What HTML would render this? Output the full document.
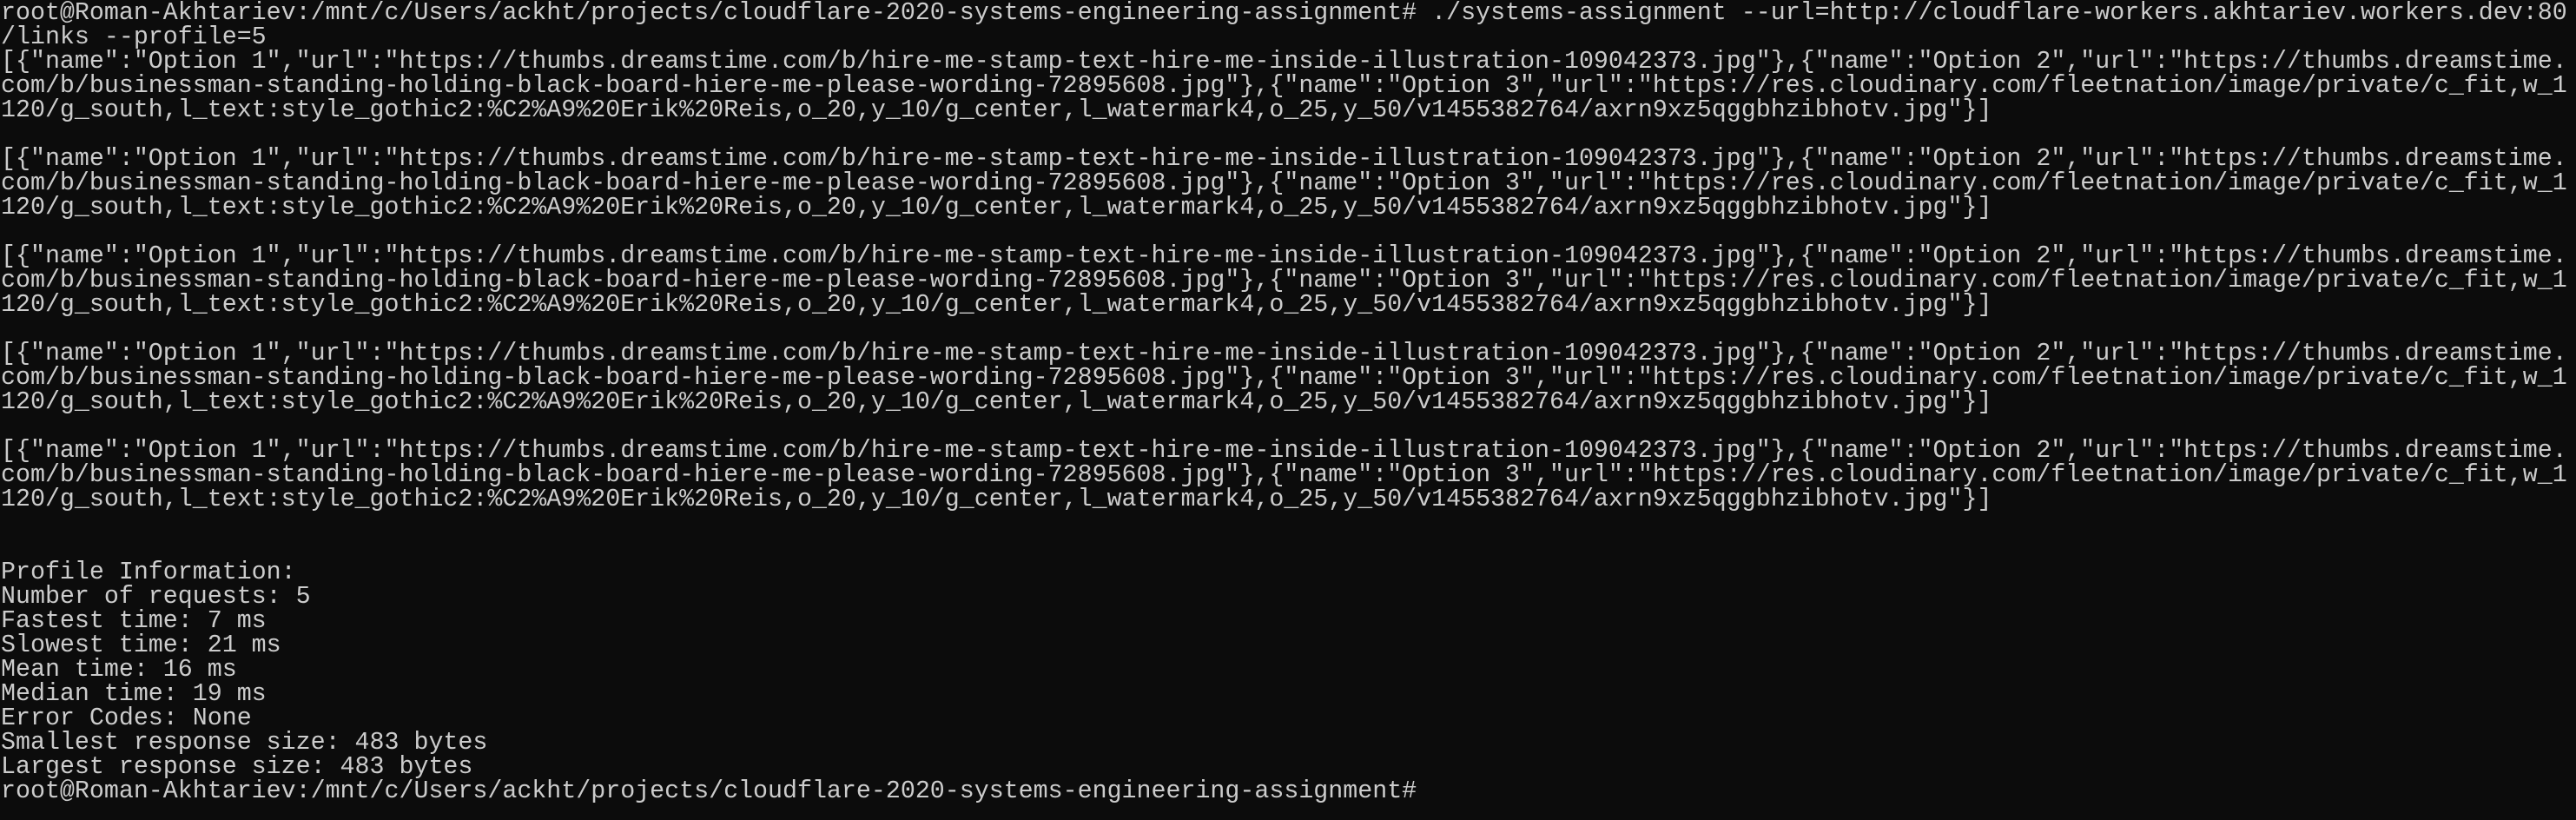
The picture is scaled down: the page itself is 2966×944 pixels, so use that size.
<!DOCTYPE html>
<html><head><meta charset="utf-8"><style>
html,body{margin:0;padding:0;background:#0c0c0c;width:2966px;height:944px;overflow:hidden}
pre{margin:0;padding:1px 0 0 1px;font-family:"Liberation Mono",monospace;font-size:28.3px;line-height:28px;color:#cccccc;white-space:pre;letter-spacing:0}
</style></head><body><pre>root@Roman-Akhtariev:/mnt/c/Users/ackht/projects/cloudflare-2020-systems-engineering-assignment# ./systems-assignment --url=http://cloudflare-workers.akhtariev.workers.dev:80
/links --profile=5
[{"name":"Option 1","url":"https://thumbs.dreamstime.com/b/hire-me-stamp-text-hire-me-inside-illustration-109042373.jpg"},{"name":"Option 2","url":"https://thumbs.dreamstime.
com/b/businessman-standing-holding-black-board-hiere-me-please-wording-72895608.jpg"},{"name":"Option 3","url":"https://res.cloudinary.com/fleetnation/image/private/c_fit,w_1
120/g_south,l_text:style_gothic2:%C2%A9%20Erik%20Reis,o_20,y_10/g_center,l_watermark4,o_25,y_50/v1455382764/axrn9xz5qggbhzibhotv.jpg"}]

[{"name":"Option 1","url":"https://thumbs.dreamstime.com/b/hire-me-stamp-text-hire-me-inside-illustration-109042373.jpg"},{"name":"Option 2","url":"https://thumbs.dreamstime.
com/b/businessman-standing-holding-black-board-hiere-me-please-wording-72895608.jpg"},{"name":"Option 3","url":"https://res.cloudinary.com/fleetnation/image/private/c_fit,w_1
120/g_south,l_text:style_gothic2:%C2%A9%20Erik%20Reis,o_20,y_10/g_center,l_watermark4,o_25,y_50/v1455382764/axrn9xz5qggbhzibhotv.jpg"}]

[{"name":"Option 1","url":"https://thumbs.dreamstime.com/b/hire-me-stamp-text-hire-me-inside-illustration-109042373.jpg"},{"name":"Option 2","url":"https://thumbs.dreamstime.
com/b/businessman-standing-holding-black-board-hiere-me-please-wording-72895608.jpg"},{"name":"Option 3","url":"https://res.cloudinary.com/fleetnation/image/private/c_fit,w_1
120/g_south,l_text:style_gothic2:%C2%A9%20Erik%20Reis,o_20,y_10/g_center,l_watermark4,o_25,y_50/v1455382764/axrn9xz5qggbhzibhotv.jpg"}]

[{"name":"Option 1","url":"https://thumbs.dreamstime.com/b/hire-me-stamp-text-hire-me-inside-illustration-109042373.jpg"},{"name":"Option 2","url":"https://thumbs.dreamstime.
com/b/businessman-standing-holding-black-board-hiere-me-please-wording-72895608.jpg"},{"name":"Option 3","url":"https://res.cloudinary.com/fleetnation/image/private/c_fit,w_1
120/g_south,l_text:style_gothic2:%C2%A9%20Erik%20Reis,o_20,y_10/g_center,l_watermark4,o_25,y_50/v1455382764/axrn9xz5qggbhzibhotv.jpg"}]

[{"name":"Option 1","url":"https://thumbs.dreamstime.com/b/hire-me-stamp-text-hire-me-inside-illustration-109042373.jpg"},{"name":"Option 2","url":"https://thumbs.dreamstime.
com/b/businessman-standing-holding-black-board-hiere-me-please-wording-72895608.jpg"},{"name":"Option 3","url":"https://res.cloudinary.com/fleetnation/image/private/c_fit,w_1
120/g_south,l_text:style_gothic2:%C2%A9%20Erik%20Reis,o_20,y_10/g_center,l_watermark4,o_25,y_50/v1455382764/axrn9xz5qggbhzibhotv.jpg"}]


Profile Information:
Number of requests: 5
Fastest time: 7 ms
Slowest time: 21 ms
Mean time: 16 ms
Median time: 19 ms
Error Codes: None
Smallest response size: 483 bytes
Largest response size: 483 bytes
root@Roman-Akhtariev:/mnt/c/Users/ackht/projects/cloudflare-2020-systems-engineering-assignment#</pre></body></html>
